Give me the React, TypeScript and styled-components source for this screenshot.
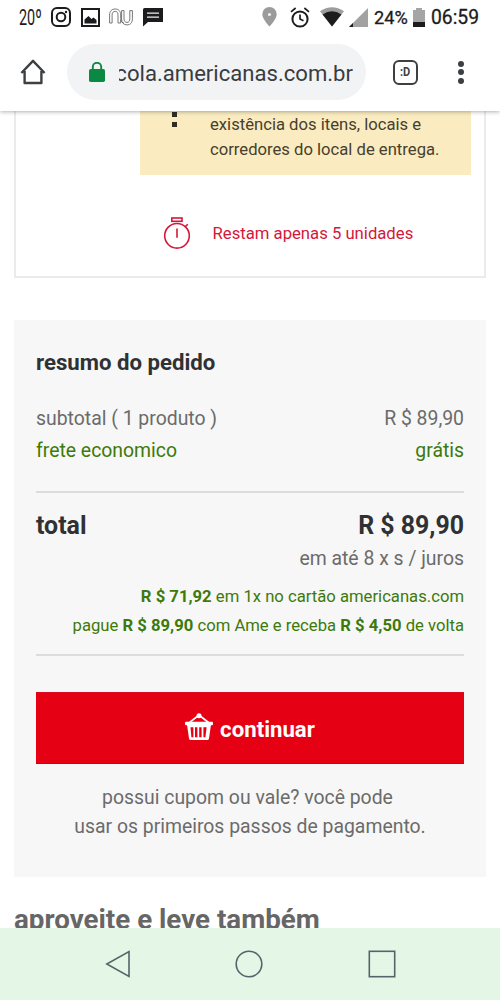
import React from "react";
import styled, { createGlobalStyle } from "styled-components";

const GlobalStyle = createGlobalStyle`
  * { box-sizing: border-box; }
  body { margin: 0; background: #fff; font-family: Roboto, "Liberation Sans", sans-serif; }
  svg { display: block; flex: none; }
`;

const Screen = styled.div`
  width: 500px;
  height: 1000px;
  display: flex;
  flex-direction: column;
  overflow: hidden;
  background: #fff;
`;

const Header = styled.header`
  position: relative;
  z-index: 1;
  flex: none;
  height: 111px;
  background: #fff;
  box-shadow: 0 1px 4px rgba(0, 0, 0, 0.3);
`;

const StatusBar = styled.div`
  display: flex;
  align-items: center;
  justify-content: space-between;
  height: 34px;
  padding: 0 21px 0 19px;
  color: #1c1c1e;
`;

const StatusGroup = styled.div<{ $gap: number }>`
  display: flex;
  align-items: center;
  gap: ${(p) => p.$gap}px;
`;

const Temperature = styled.span`
  width: 22px;
  font-size: 22.5px;
  line-height: 34px;
  white-space: nowrap;
  transform: scaleX(0.64);
  transform-origin: left center;
`;

const StatusText = styled.span<{ $width: number; $size: number }>`
  width: ${(p) => p.$width}px;
  padding-top: 1px;
  font-size: ${(p) => p.$size}px;
  line-height: 34px;
  white-space: nowrap;
  -webkit-text-stroke: 0.3px currentColor;
`;

const Toolbar = styled.div`
  display: flex;
  align-items: center;
  height: 56px;
  margin-top: 10px;
  padding: 0 34px 0 20px;
`;

const AddressPill = styled.div`
  display: flex;
  align-items: center;
  width: 299px;
  height: 56px;
  margin-left: 21px;
  padding: 0 13px 0 22px;
  border-radius: 28px;
  background: #f1f3f4;
`;

const Address = styled.div`
  display: flex;
  justify-content: flex-end;
  width: 234px;
  margin-left: auto;
  padding-top: 2px;
  overflow: hidden;
  color: #3a3c3f;
  font-size: 22.1px;
  line-height: 40px;
  white-space: nowrap;
`;

const TabButton = styled.div`
  display: flex;
  align-items: center;
  justify-content: center;
  width: 25px;
  height: 25px;
  margin-left: 27px;
  border: 2px solid #3c4043;
  border-radius: 6px;
  color: #3c4043;
  font-size: 13px;
  font-weight: 700;
  line-height: 20px;
`;

const TabLabel = styled.span`
  transform: scaleX(0.85);
`;

const MenuDots = styled.div`
  display: flex;
  flex-direction: column;
  gap: 2.5px;
  margin-left: auto;
  padding-right: 2px;
`;

const Dot = styled.i`
  width: 6px;
  height: 6px;
  border-radius: 50%;
  background: #3c4043;
`;

const Page = styled.main`
  flex: 1;
  min-height: 0;
  padding: 0 14px;
  overflow: hidden;
`;

const ProductCard = styled.section`
  height: 167px;
  padding: 0 13px 0 124px;
  border: 2px solid #ebebeb;
  border-top: 0;
`;

const Notice = styled.div`
  display: flex;
  height: 64px;
  padding: 0.5px 0 0 32px;
  background: #faecc0;
  color: #47402d;
`;

const NoticeMark = styled.div`
  display: flex;
  flex-direction: column;
  gap: 5px;
  width: 38px;
`;

const MarkBlock = styled.i`
  width: 5px;
  height: 5px;
  background: #302d27;
`;

const NoticeText = styled.p`
  margin: 0;
  font-size: 16.65px;
  line-height: 25px;
  white-space: nowrap;
`;

const StockAlert = styled.div`
  display: flex;
  align-items: center;
  gap: 22px;
  height: 34px;
  margin-top: 41px;
  padding-left: 22.5px;
  color: #d5173a;
  font-size: 16.7px;
  line-height: 24px;
`;

const AlertText = styled.span`
  padding-top: 2px;
`;

const Summary = styled.section`
  height: 557px;
  margin-top: 42px;
  padding: 27px 22px 0;
  background: #f7f7f7;
  color: #666;
`;

const SummaryTitle = styled.h2`
  margin: 0 0 26px;
  color: #2f3133;
  font-size: 22.2px;
  font-weight: 700;
  line-height: 30px;
`;

const Row = styled.div<{ $green?: boolean }>`
  display: flex;
  justify-content: space-between;
  color: ${(p) => (p.$green ? "#3d7a0a" : "#6b6b6b")};
  font-size: 19.4px;
  line-height: 32px;
`;

const Divider = styled.hr<{ $top: number }>`
  height: 2px;
  margin: ${(p) => p.$top}px 0 0;
  border: 0;
  background: #dcdcdc;
`;

const TotalRow = styled.div`
  display: flex;
  justify-content: space-between;
  margin-top: 16px;
  color: #2f3133;
  font-size: 24.9px;
  font-weight: 700;
  line-height: 34px;
`;

const Installments = styled.p`
  margin: 1px 0 8px;
  color: #6b6b6b;
  font-size: 19.4px;
  line-height: 30px;
  text-align: right;
`;

const Offer = styled.p`
  margin: 0;
  color: #3d7a0a;
  font-size: 16.67px;
  line-height: 29px;
  text-align: right;
  white-space: nowrap;
`;

const ContinueButton = styled.button`
  display: flex;
  align-items: center;
  justify-content: center;
  gap: 7px;
  width: 100%;
  height: 72px;
  margin: 36px 0 19px;
  padding: 1px 0 0;
  border: 0;
  border-top: 1px solid #d90a1c;
  border-bottom: 1px solid #c00718;
  background: #e60014;
  color: #fff;
  font-family: inherit;
  font-size: 22.2px;
  font-weight: 700;
`;

const BasketSlot = styled.span`
  padding-bottom: 4px;
`;

const CouponNote = styled.p`
  margin: 0;
  color: #6b6b6b;
  font-size: 19.4px;
  line-height: 29px;
  text-align: center;
`;

const CouponLine = styled.span<{ $trail?: number }>`
  display: block;
  padding-right: ${(p) => p.$trail ?? 0}px;
`;

const NextTitle = styled.h2`
  margin: 26px 0 0;
  color: #666;
  font-size: 27.75px;
  font-weight: 700;
  line-height: 34px;
  white-space: nowrap;
`;

const NavBar = styled.nav`
  display: flex;
  justify-content: space-between;
  align-items: center;
  flex: none;
  height: 72px;
  padding: 0 104px 0 105px;
  background: #e4f6e6;
`;

const InstagramIcon = () => (
  <svg width="20" height="20" viewBox="0 0 20 20" fill="none" stroke="#1c1c1e" strokeWidth="2">
    <rect x="1" y="1" width="18" height="18" rx="5" />
    <circle cx="10" cy="10" r="4.3" />
    <circle cx="15" cy="5" r="1.2" fill="#1c1c1e" stroke="none" />
  </svg>
);

const PictureIcon = () => (
  <svg width="19" height="19" viewBox="0 0 19 19">
    <rect x="1" y="1" width="17" height="17" fill="none" stroke="#1c1c1e" strokeWidth="2" />
    <path d="M3.5 15.5v-4l4-3.5 3 3 2-1.5 3 2.5v3.5z" fill="#1c1c1e" />
  </svg>
);

const NuIcon = () => (
  <svg width="24" height="18" viewBox="0 0 24 18" fill="none" stroke="#555" strokeWidth="0.8">
    <path d="M.6 15V7C.6 3 2.8 1 6.2 1s5.5 2.2 5.5 6v3.5c0 2.6 1 4.2 3 4.2" />
    <path d="M.6 15h2.5V7.2c0-2.6 1.1-3.8 3.1-3.8S9 4.8 9 7.2V15h2.7v-3" />
    <path d="M12.6 11V2.6H15v7.6c0 2.9 1 4.2 3 4.2s2.8-1.4 2.8-4V2.6h2.6v8c0 4-2 6.3-5.3 6.3-3.5 0-5.5-2.3-5.5-5.9z" />
  </svg>
);

const MessageIcon = () => (
  <svg width="20" height="19" viewBox="0 0 20 19">
    <path d="M1.5 0H20v14H5L0 18.5V1.5Q0 0 1.5 0z" fill="#1c1c1e" />
    <path d="M4 5.2h12M4 9.2h12" stroke="#eee" strokeWidth="1.3" />
  </svg>
);

const PinIcon = () => (
  <svg width="15" height="20" viewBox="0 0 15 20">
    <path d="M7.5 0A7.2 7.2 0 0 0 .3 7.2C.3 12 7.5 19.5 7.5 19.5S14.7 12 14.7 7.2A7.2 7.2 0 0 0 7.5 0z" fill="#9b9b9b" />
    <circle cx="7.5" cy="7.5" r="1.6" fill="#eee" />
  </svg>
);

const AlarmIcon = () => (
  <svg width="20" height="21" viewBox="0 0 20 21" fill="none" stroke="#1c1c1e" strokeWidth="2">
    <circle cx="10" cy="12" r="7.6" />
    <path d="M1 4.8L5.6 1M19 4.8L14.4 1M10 7.5V12l3.5 1.8" strokeWidth="1.7" />
  </svg>
);

const WifiIcon = () => (
  <svg width="24" height="20" viewBox="0 0 24 20">
    <path d="M0 4.3Q12-3.6 24 4.3L12 19.5z" fill="#9d9d9d" />
    <path d="M2.6 7.4Q12 1.2 21.4 7.4L12 19.5z" fill="#1c1c1e" />
  </svg>
);

const SignalIcon = () => (
  <svg width="19" height="19" viewBox="0 0 19 19">
    <path d="M19 0v19H0z" fill="#a2a2a2" />
    <path d="M4 15v4H0z" fill="#1c1c1e" />
  </svg>
);

const BatteryIcon = () => (
  <svg width="12" height="19" viewBox="0 0 12 19">
    <path d="M0 2h3V0h6v2h3v17H0z" fill="#a5a5a5" />
    <path d="M0 14h12v5H0z" fill="#1c1c1e" />
  </svg>
);

const HomeIcon = () => (
  <svg width="26" height="26" viewBox="0 0 26 26" fill="none" stroke="#3c4043" strokeWidth="2.4" strokeLinejoin="round">
    <path d="M1.4 14L13 1.8 24.6 14M4.6 12v12h16.8V12" />
  </svg>
);

const LockIcon = () => (
  <svg width="16" height="20" viewBox="0 0 16 20">
    <rect y="7" width="16" height="13" rx="1.8" fill="#0b8842" />
    <path d="M3.8 8V5a4.2 4.2 0 0 1 8.4 0v3" fill="none" stroke="#0b8842" strokeWidth="1.9" />
  </svg>
);

const StopwatchIcon = () => (
  <svg width="28" height="32" viewBox="0 0 28 32" fill="none" stroke="#d5173a" strokeWidth="1.6">
    <circle cx="14" cy="18.8" r="12.3" />
    <rect x="8.8" y="1" width="10.2" height="3.3" />
    <path d="M14 11.5v9.3M22.2 9.8l2.6-2.6" />
  </svg>
);

const BasketIcon = () => (
  <svg width="28" height="28" viewBox="0 0 28 28">
    <path d="M4.5 9.5L14 2l9.5 7.5" fill="none" stroke="#fff" strokeWidth="1.7" />
    <circle cx="14" cy="2.7" r="2.5" fill="#fff" />
    <rect x="0" y="8.8" width="28" height="3.4" rx="1" fill="#fff" />
    <path
      fillRule="evenodd"
      fill="#fff"
      d="M2 11.5h24l-2 14q-.2 1.5-1.8 1.5H5.8Q4.2 27 4 25.5zM5.5 14.3l.9 10h2v-10zM10 14.3v10h2.4v-10zM14.2 14.3v10h2.4v-10zM18.4 14.3v10h2l1.2-10z"
    />
  </svg>
);

const BackIcon = () => (
  <svg width="25" height="28" viewBox="0 0 25 28" fill="none" stroke="#52666a" strokeWidth="1.6">
    <path d="M24 1.5v25L1.8 14z" />
  </svg>
);

const CircleIcon = () => (
  <svg width="28" height="28" viewBox="0 0 28 28" fill="none" stroke="#52666a" strokeWidth="1.6">
    <circle cx="14" cy="14" r="12.8" />
  </svg>
);

const SquareIcon = () => (
  <svg width="28" height="28" viewBox="0 0 28 28" fill="none" stroke="#52666a" strokeWidth="1.6">
    <rect x="1.3" y="1.3" width="25.4" height="25.4" />
  </svg>
);

export default function App() {
  return (
    <Screen>
      <GlobalStyle />
      <Header>
        <StatusBar>
          <StatusGroup $gap={9.8}>
            <Temperature>20º</Temperature>
            <InstagramIcon />
            <PictureIcon />
            <NuIcon />
            <MessageIcon />
          </StatusGroup>
          <StatusGroup $gap={5}>
            <StatusGroup $gap={10}>
              <StatusGroup $gap={13}>
                <PinIcon />
                <AlarmIcon />
              </StatusGroup>
              <WifiIcon />
            </StatusGroup>
            <StatusGroup $gap={6}>
              <SignalIcon />
              <StatusText $width={33} $size={18.2}>24%</StatusText>
              <BatteryIcon />
              <StatusText $width={48} $size={19.3}>06:59</StatusText>
            </StatusGroup>
          </StatusGroup>
        </StatusBar>
        <Toolbar>
          <HomeIcon />
          <AddressPill>
            <LockIcon />
            <Address>cola.americanas.com.br</Address>
          </AddressPill>
          <TabButton>
            <TabLabel>:D</TabLabel>
          </TabButton>
          <MenuDots>
            <Dot />
            <Dot />
            <Dot />
          </MenuDots>
        </Toolbar>
      </Header>
      <Page>
        <ProductCard>
          <Notice>
            <NoticeMark>
              <MarkBlock />
              <MarkBlock />
            </NoticeMark>
            <NoticeText>
              existência dos itens, locais e<br />
              corredores do local de entrega.
            </NoticeText>
          </Notice>
          <StockAlert>
            <StopwatchIcon />
            <AlertText>Restam apenas 5 unidades</AlertText>
          </StockAlert>
        </ProductCard>
        <Summary>
          <SummaryTitle>resumo do pedido</SummaryTitle>
          <Row>
            <span>subtotal ( 1 produto )</span>
            <span>R $ 89,90</span>
          </Row>
          <Row $green>
            <span>frete economico</span>
            <span>grátis</span>
          </Row>
          <Divider $top={24} />
          <TotalRow>
            <span>total</span>
            <span>R $ 89,90</span>
          </TotalRow>
          <Installments>em até 8 x s / juros</Installments>
          <Offer>
            <b>R $ 71,92</b> em 1x no cartão americanas.com
          </Offer>
          <Offer>
            pague <b>R $ 89,90</b> com Ame e receba <b>R $ 4,50</b> de volta
          </Offer>
          <Divider $top={14} />
          <ContinueButton>
            <BasketSlot>
              <BasketIcon />
            </BasketSlot>
            <span>continuar</span>
          </ContinueButton>
          <CouponNote>
            <CouponLine $trail={5}>possui cupom ou vale? você pode</CouponLine>
            <CouponLine>usar os primeiros passos de pagamento.</CouponLine>
          </CouponNote>
        </Summary>
        <NextTitle>aproveite e leve também</NextTitle>
      </Page>
      <NavBar>
        <BackIcon />
        <CircleIcon />
        <SquareIcon />
      </NavBar>
    </Screen>
  );
}
